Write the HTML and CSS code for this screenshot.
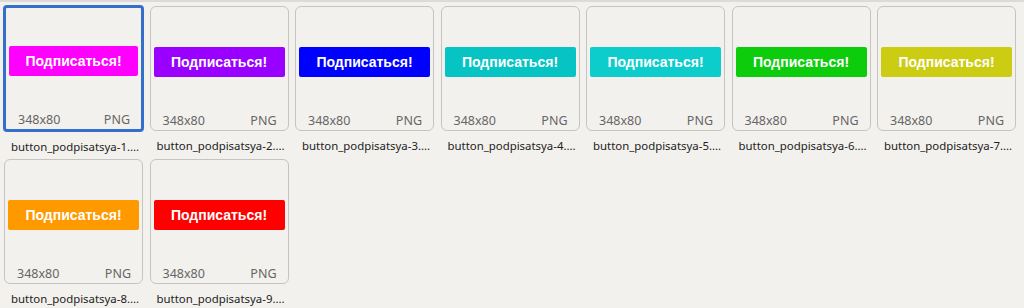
FILE: index.html
```html
<!DOCTYPE html>
<html lang="ru">
<head>
  <meta charset="UTF-8">
  <title>Файлы</title>
  <link rel="stylesheet" href="styles.css">
</head>
<body>
  <div class="topbar"></div>
  <div class="grid">
    <div class="item">
      <div class="tile selected">
        <div class="btn magenta">Подписаться!</div>
        <div class="meta"><span>348x80</span><span>PNG</span></div>
      </div>
      <div class="name">button_podpisatsya-1....</div>
    </div>
    <div class="item">
      <div class="tile">
        <div class="btn purple">Подписаться!</div>
        <div class="meta"><span>348x80</span><span>PNG</span></div>
      </div>
      <div class="name">button_podpisatsya-2....</div>
    </div>
    <div class="item">
      <div class="tile">
        <div class="btn blue">Подписаться!</div>
        <div class="meta"><span>348x80</span><span>PNG</span></div>
      </div>
      <div class="name">button_podpisatsya-3....</div>
    </div>
    <div class="item">
      <div class="tile">
        <div class="btn teal">Подписаться!</div>
        <div class="meta"><span>348x80</span><span>PNG</span></div>
      </div>
      <div class="name">button_podpisatsya-4....</div>
    </div>
    <div class="item">
      <div class="tile">
        <div class="btn cyan">Подписаться!</div>
        <div class="meta"><span>348x80</span><span>PNG</span></div>
      </div>
      <div class="name">button_podpisatsya-5....</div>
    </div>
    <div class="item">
      <div class="tile">
        <div class="btn green">Подписаться!</div>
        <div class="meta"><span>348x80</span><span>PNG</span></div>
      </div>
      <div class="name">button_podpisatsya-6....</div>
    </div>
    <div class="item">
      <div class="tile">
        <div class="btn olive">Подписаться!</div>
        <div class="meta"><span>348x80</span><span>PNG</span></div>
      </div>
      <div class="name">button_podpisatsya-7....</div>
    </div>
    <div class="item">
      <div class="tile">
        <div class="btn orange">Подписаться!</div>
        <div class="meta"><span>348x80</span><span>PNG</span></div>
      </div>
      <div class="name">button_podpisatsya-8....</div>
    </div>
    <div class="item">
      <div class="tile">
        <div class="btn red">Подписаться!</div>
        <div class="meta"><span>348x80</span><span>PNG</span></div>
      </div>
      <div class="name">button_podpisatsya-9....</div>
    </div>
  </div>
</body>
</html>
```
FILE: styles.css
```css
body {
  margin: 0;
  background: #f3f1ed;
  font-family: "Noto Sans", "Open Sans", sans-serif;
  overflow: hidden;
}
.topbar {
  height: 2px;
  background: #dedbd6;
}
.grid {
  display: grid;
  grid-template-columns: repeat(7, 139px);
  column-gap: 6.5px;
  row-gap: 0;
  padding: 4px 0 0 4px;
}
.item {
  height: 153px;
}
.tile {
  box-sizing: border-box;
  height: 125px;
  border: 1px solid #c6c4c0;
  border-radius: 6px;
  display: flex;
  flex-direction: column;
  padding: 40px 3px 0 3px;
}
.tile.selected {
  border: 3px solid #3470cb;
  border-radius: 4px;
  margin: -1px -1px 0 -1px;
  height: 127px;
  padding: 38px 3px 0 3px;
}
.btn {
  height: 30px;
  border-radius: 2px;
  color: #fff;
  font-family: "Liberation Sans", Arial, sans-serif;
  font-weight: bold;
  font-size: 14px;
  display: flex;
  align-items: center;
  justify-content: center;
}
.magenta { background: #ff00ff; }
.purple { background: #9900ff; }
.blue { background: #0000ff; }
.teal { background: #06c4c4; }
.cyan { background: #0ccccc; }
.green { background: #0ccc0c; }
.olive { background: #cccc12; }
.orange { background: #ff9900; }
.red { background: #ff0000; }
.meta {
  margin-top: auto;
  display: flex;
  justify-content: space-between;
  padding: 0 8px 1px 9px;
  font-size: 12.5px;
  color: #666;
  line-height: 16px;
}
.name {
  margin-top: 7px;
  padding-left: 7px;
  font-size: 11.4px;
  color: #222;
  white-space: nowrap;
}
```
